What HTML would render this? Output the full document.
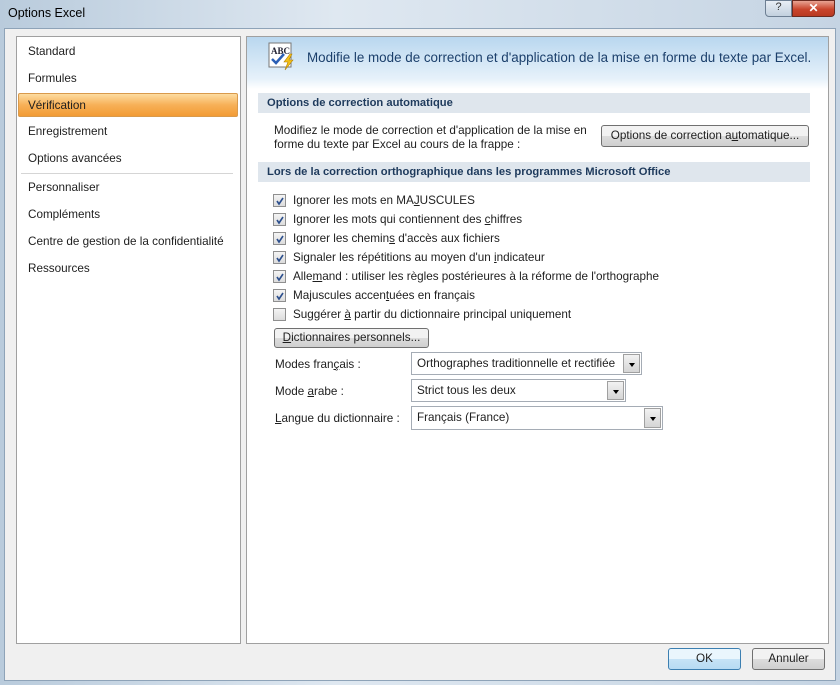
<!DOCTYPE html>
<html><head><meta charset="utf-8"><style>
*{box-sizing:border-box;margin:0;padding:0}
body{width:840px;height:685px;overflow:hidden;font-family:"Liberation Sans",sans-serif;font-size:11.7px;color:#1e1e1e;position:relative;background:linear-gradient(90deg,#b9cbdc,#dfe8f1 40%,#c5d4e3);}
.abs{position:absolute}
.win{position:absolute;left:4px;top:28px;width:832px;height:653px;background:#f0f0f0;border:1px solid #8ea3b8}
.panel{position:absolute;background:#fff;border:1px solid #a0a0a0}
.li{position:absolute;left:11px;font-size:11.7px}
.chk{position:absolute;left:273px;width:13px;height:13px;border:1px solid #8f8f8f;background:linear-gradient(#f4f4f4,#dcdcdc)}
.chk svg{position:absolute;left:1px;top:1px}
.ct{position:absolute;left:293px}
.btn{position:absolute;border:1px solid #707070;border-radius:3px;background:linear-gradient(#f2f2f2 50%,#dddddd 50%,#cfcfcf);text-align:center;font-size:11.7px}
.sel{position:absolute;border:1px solid #a5acb5;background:#fff;padding-left:5px;line-height:21px}
.arr{position:absolute;right:1px;top:1px;bottom:1px;width:17px;border:1px solid #a0a0a0;background:linear-gradient(#f2f2f2,#d5d5d5)}
.arr:after{content:"";position:absolute;left:5px;top:8px;border:3px solid transparent;border-top:4px solid #000}
.sh{position:absolute;left:258px;width:552px;height:20px;background:#dfe6ed;font-weight:bold;color:#1e3a5c;padding-left:9px;line-height:20px;font-size:11.2px}
u{text-decoration:underline}
</style></head><body>
<div class="abs" style="left:8px;top:6px;font-size:12.5px;color:#000">Options Excel</div>
<div class="abs" style="left:765px;top:0;width:27px;height:17px;border:1px solid #6d7f93;border-radius:0 0 0 4px;background:linear-gradient(#e8eef5,#c2d0de);text-align:center;font-size:11px;color:#333">?</div>
<div class="abs" style="left:792px;top:0;width:43px;height:17px;border:1px solid #6b2a20;border-radius:0 0 4px 0;background:linear-gradient(#e8a393,#c9452d 55%,#b93a22);text-align:center;color:#fff;font-weight:bold;font-size:12px">✕</div>
<div class="win"></div>
<div class="panel" style="left:16px;top:36px;width:225px;height:608px">
<div class="li" style="top:8px">Standard</div>
<div class="li" style="top:35px">Formules</div>
<div class="abs" style="left:1px;top:56px;width:220px;height:24px;border:1px solid #d99a4c;border-radius:2px;background:linear-gradient(#fddca0,#f7b057 50%,#f29b35);"></div>
<div class="li" style="top:62px">Vérification</div>
<div class="li" style="top:88px">Enregistrement</div>
<div class="li" style="top:115px">Options avancées</div>
<div class="abs" style="left:4px;top:136px;width:212px;height:1px;background:#d5d5d5"></div>
<div class="li" style="top:144px">Personnaliser</div>
<div class="li" style="top:171px">Compléments</div>
<div class="li" style="top:198px">Centre de gestion de la confidentialité</div>
<div class="li" style="top:225px">Ressources</div>
</div>
<div class="panel" style="left:246px;top:36px;width:583px;height:608px">
<div class="abs" style="left:0;top:0;width:581px;height:52px;background:linear-gradient(#b9d7ef,#e6f1fa 80%,#fff)"></div>
</div>
<svg class="abs" style="left:268px;top:42px" width="30" height="30"><rect x="1" y="1" width="22" height="24" fill="#fff" stroke="#777"/><text x="3" y="12" font-size="9" font-family="Liberation Serif" font-weight="bold" fill="#223">ABC</text><path d="M4 17l4 4 8-9" stroke="#2b5fb5" stroke-width="2.5" fill="none"/><path d="M22 12l-6 8h4l-3 8 8-10h-4l3-6z" fill="#f5c21a" stroke="#b07d00" stroke-width=".6"/></svg>
<div class="abs" style="left:307px;top:50px;font-size:13.4px;color:#1b3f6b">Modifie le mode de correction et d'application de la mise en forme du texte par Excel.</div>
<div class="sh" style="top:93px">Options de correction automatique</div>
<div class="abs" style="left:274px;top:124px;line-height:14px">Modifiez le mode de correction et d'application de la mise en<br>forme du texte par Excel au cours de la frappe :</div>
<div class="btn" style="left:601px;top:125px;width:208px;height:22px;line-height:20px">Options de correction a<u>u</u>tomatique...</div>
<div class="sh" style="top:162px">Lors de la correction orthographique dans les programmes Microsoft Office</div>
<div class="chk" style="top:194px"><svg width="10" height="10"><path d="M2 5l2 3 4-6" stroke="#2b4e8c" stroke-width="1.6" fill="none"/></svg></div><div class="ct" style="top:194px">Ignorer les mots en MA<u>J</u>USCULES</div>
<div class="chk" style="top:213px"><svg width="10" height="10"><path d="M2 5l2 3 4-6" stroke="#2b4e8c" stroke-width="1.6" fill="none"/></svg></div><div class="ct" style="top:213px">Ignorer les mots qui contiennent des <u>c</u>hiffres</div>
<div class="chk" style="top:232px"><svg width="10" height="10"><path d="M2 5l2 3 4-6" stroke="#2b4e8c" stroke-width="1.6" fill="none"/></svg></div><div class="ct" style="top:232px">Ignorer les chemin<u>s</u> d'accès aux fichiers</div>
<div class="chk" style="top:251px"><svg width="10" height="10"><path d="M2 5l2 3 4-6" stroke="#2b4e8c" stroke-width="1.6" fill="none"/></svg></div><div class="ct" style="top:251px">Signaler les répétitions au moyen d'un <u>i</u>ndicateur</div>
<div class="chk" style="top:270px"><svg width="10" height="10"><path d="M2 5l2 3 4-6" stroke="#2b4e8c" stroke-width="1.6" fill="none"/></svg></div><div class="ct" style="top:270px">Alle<u>m</u>and : utiliser les règles postérieures à la réforme de l'orthographe</div>
<div class="chk" style="top:289px"><svg width="10" height="10"><path d="M2 5l2 3 4-6" stroke="#2b4e8c" stroke-width="1.6" fill="none"/></svg></div><div class="ct" style="top:289px">Majuscules accen<u>t</u>uées en français</div>
<div class="chk" style="top:308px"></div><div class="ct" style="top:308px">Suggérer <u>à</u> partir du dictionnaire principal uniquement</div>
<div class="btn" style="left:274px;top:328px;width:155px;height:20px;line-height:18px"><u>D</u>ictionnaires personnels...</div>
<div class="abs" style="left:275px;top:358px">Modes fran<u>ç</u>ais :</div>
<div class="sel" style="left:411px;top:352px;width:231px;height:23px">Orthographes traditionnelle et rectifiée<div class="arr"></div></div>
<div class="abs" style="left:275px;top:385px">Mode <u>a</u>rabe :</div>
<div class="sel" style="left:411px;top:379px;width:215px;height:23px">Strict tous les deux<div class="arr"></div></div>
<div class="abs" style="left:275px;top:412px"><u>L</u>angue du dictionnaire :</div>
<div class="sel" style="left:411px;top:406px;width:252px;height:24px">Français (France)<div class="arr"></div></div>
<div class="btn" style="left:668px;top:648px;width:73px;height:22px;line-height:20px;border-color:#3c7fb1;background:linear-gradient(#eaf6fd 50%,#c6e3f6 50%,#b7dbf3)">OK</div>
<div class="btn" style="left:752px;top:648px;width:73px;height:22px;line-height:20px">Annuler</div>
</body></html>
